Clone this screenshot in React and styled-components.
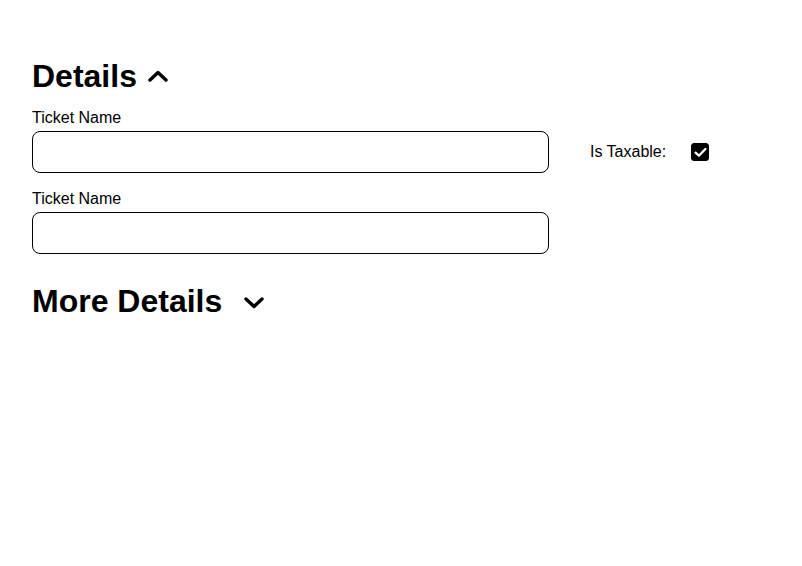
import React from "react";
import styled, { createGlobalStyle } from "styled-components";

const GlobalStyle = createGlobalStyle`
  html, body {
    margin: 0;
    padding: 0;
    background: #ffffff;
  }
  body {
    font-family: "Liberation Sans", Arial, sans-serif;
    color: #000000;
  }
`;

const Page = styled.main`
  padding: 58px 32px 32px 32px;
`;

const SectionHeader = styled.button`
  display: flex;
  align-items: center;
  gap: ${(p) => p.$gap}px;
  margin: 0;
  padding: 0;
  border: none;
  background: none;
  cursor: pointer;
  font-family: inherit;
  color: inherit;
`;

const Title = styled.h2`
  margin: 0;
  font-size: 32px;
  font-weight: 700;
  line-height: 37px;
`;

const Chevron = styled.svg`
  display: block;
  width: 20px;
  height: 12px;
  margin-top: ${(p) => p.$offset}px;
`;

const FormRow = styled.div`
  display: flex;
  align-items: flex-start;
  margin-top: 14px;
`;

const Fields = styled.div`
  display: flex;
  flex-direction: column;
  gap: 17px;
  width: 517px;
`;

const Field = styled.label`
  display: flex;
  flex-direction: column;
  gap: 4px;
`;

const FieldLabel = styled.span`
  font-size: 16px;
  line-height: 18px;
`;

const TextInput = styled.input`
  box-sizing: border-box;
  width: 100%;
  height: 42px;
  border: 1px solid #000000;
  border-radius: 8px;
  padding: 0 12px;
  font-family: inherit;
  font-size: 16px;
  outline: none;
  background: #ffffff;
`;

const TaxableGroup = styled.label`
  display: flex;
  align-items: center;
  gap: 25px;
  margin-left: 41px;
  margin-top: 22px;
  height: 42px;
  font-size: 16px;
`;

const CheckBox = styled.span`
  display: flex;
  align-items: center;
  justify-content: center;
  width: 18px;
  height: 18px;
  border-radius: 3px;
  background: ${(p) => (p.$checked ? "#000000" : "#ffffff")};
  border: 1px solid #000000;
  box-sizing: border-box;
`;

const MoreSection = styled.section`
  margin-top: 29px;
`;

function ChevronIcon({ up, offset }) {
  return (
    <Chevron viewBox="0 0 20 12" $offset={offset} aria-hidden="true">
      <polyline
        points={up ? "2,10 10,2.5 18,10" : "2,2 10,9.5 18,2"}
        fill="none"
        stroke="#000"
        strokeWidth="3.4"
        strokeLinecap="round"
        strokeLinejoin="round"
      />
    </Chevron>
  );
}

export default function App() {
  const [open, setOpen] = React.useState(true);
  const [more, setMore] = React.useState(false);
  const [taxable, setTaxable] = React.useState(true);

  return (
    <>
      <GlobalStyle />
      <Page>
        <section>
          <SectionHeader $gap={11} onClick={() => setOpen(!open)}>
            <Title>Details</Title>
            <ChevronIcon up={open} offset={-1} />
          </SectionHeader>
          {open && (
            <FormRow>
              <Fields>
                <Field>
                  <FieldLabel>Ticket Name</FieldLabel>
                  <TextInput type="text" />
                </Field>
                <Field>
                  <FieldLabel>Ticket Name</FieldLabel>
                  <TextInput type="text" />
                </Field>
              </Fields>
              <TaxableGroup onClick={() => setTaxable(!taxable)}>
                <span>Is Taxable:</span>
                <CheckBox $checked={taxable} role="checkbox" aria-checked={taxable}>
                  {taxable && (
                    <svg width="13" height="11" viewBox="0 0 13 11" aria-hidden="true">
                      <polyline
                        points="1.6,5.6 4.9,8.7 11.4,2"
                        fill="none"
                        stroke="#fff"
                        strokeWidth="2.3"
                        strokeLinecap="round"
                        strokeLinejoin="round"
                      />
                    </svg>
                  )}
                </CheckBox>
              </TaxableGroup>
            </FormRow>
          )}
        </section>
        <MoreSection>
          <SectionHeader $gap={22} onClick={() => setMore(!more)}>
            <Title>More Details</Title>
            <ChevronIcon up={more} offset={3} />
          </SectionHeader>
        </MoreSection>
      </Page>
    </>
  );
}
